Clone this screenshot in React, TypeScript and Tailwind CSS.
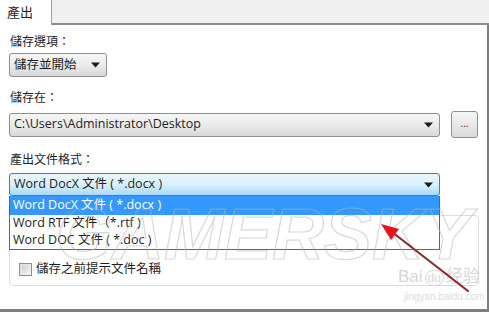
import React from 'react';

const font = { fontFamily: '"Open Sans", "Noto Sans CJK TC", sans-serif' };

const Arrow = () => (
  <svg width="9" height="6" viewBox="0 0 9 6" className="shrink-0">
    <path d="M0 0.5 H9 L4.5 5.5 Z" fill="#1a1a1a" />
  </svg>
);

const Combo = ({ label, className, blue }: { label: string; className: string; blue?: boolean }) => (
  <div
    className={`flex items-center justify-between pl-[4px] pr-[6px] rounded-[3px] border text-[12.5px] text-[#1e1e1e] ${
      blue
        ? 'border-[#3c7fb1] bg-gradient-to-b from-[#eaf6fd] via-[#d9f0fc] to-[#a7d9f5]'
        : 'border-[#8e8f8f] bg-gradient-to-b from-[#f6f6f6] via-[#ebebeb] to-[#d8d8d8]'
    } ${className}`}
  >
    <span className="leading-none whitespace-nowrap">{label}</span>
    <Arrow />
  </div>
);

export default function App() {
  return (
    <div className="relative w-[489px] h-[312px] bg-white overflow-hidden flex flex-col text-[#1e1e1e]" style={font}>
      <div className="flex h-[25px] shrink-0">
        <div className="w-[52px] border-r border-[#a0a0a0] bg-white flex items-center pl-[7px] text-[13px] leading-none">產出</div>
        <div className="flex-1 bg-[#f0f0f0] border-b-2 border-[#8c8c8c]" />
      </div>

      <div className="flex-1 border-r-2 border-b-[3px] border-[#7e7e7e] pl-[9px] flex flex-col">
        <div className="mt-[9px] h-[16px] text-[12px] leading-[16px] pl-[1px]">儲存選項：</div>
        <Combo label="儲存並開始" className="mt-[3px] w-[98px] h-[24px]" />

        <div className="mt-[13px] h-[16px] text-[12px] leading-[16px] pl-[1px]">儲存在：</div>
        <div className="mt-[5px] flex items-center h-[27px]">
          <Combo label="C:\Users\Administrator\Desktop" className="w-[431px] h-[24px]" />
          <div className="ml-[11px] w-[27px] h-[27px] rounded-[3px] border border-[#8e8f8f] bg-gradient-to-b from-[#f6f6f6] to-[#dadada] flex items-center justify-center text-[10px] leading-none text-[#333] pb-[3px]">
            ...
          </div>
        </div>

        <div className="mt-[14px] h-[16px] text-[12px] leading-[16px] pl-[1px]">產出文件格式：</div>
        <div className="relative mt-[5px]">
          <Combo label="Word DocX 文件 ( *.docx )" className="w-[431px] h-[23px]" blue />
          <div className="mt-[19px] w-[470px] h-[71px] rounded-[4px] border border-[#d5dfe5] flex items-end pb-[9px] pl-[9px]">
            <div className="flex items-center gap-[4px]">
              <div className="w-[13px] h-[13px] border border-[#8e8f8f] bg-gradient-to-br from-[#dcdcdc] to-[#f4f4f4] p-[2px]">
                <div className="w-full h-full bg-gradient-to-br from-[#cbcfd5] to-[#f0f2f4]" />
              </div>
              <span className="text-[12.5px] leading-none">儲存之前提示文件名稱</span>
            </div>
          </div>

          <div className="absolute left-0 top-[23px] w-[431px] h-[54px] bg-white border border-t-0 border-[#646464] flex flex-col text-[12.5px]">
            <div className="h-[19px] bg-[#3399ff] text-white pl-[3px] flex items-center leading-none">Word DocX 文件 ( *.docx )</div>
            <div className="h-[17px] pl-[3px] flex items-center leading-none">Word RTF 文件（*.rtf )</div>
            <div className="h-[17px] pl-[3px] flex items-center leading-none">Word DOC 文件 ( *.doc )</div>
          </div>
        </div>
      </div>

      <div
        className="absolute left-[56px] top-[198px] text-[72px] italic font-bold leading-none pointer-events-none text-transparent opacity-50"
        style={{ fontFamily: '"Liberation Sans", sans-serif', WebkitTextStroke: '1.2px #b4b4b4' }}
      >
        GAMERSKY
      </div>
      <div className="absolute left-[398px] top-[268px] text-[17px] leading-none text-[#d6d6d6] pointer-events-none" style={{ fontFamily: '"Liberation Sans", "Noto Sans CJK SC", sans-serif' }}>
        Bai<span className="mx-[2px] border border-[#d6d6d6] rounded-full px-[2px] text-[12px]">du</span>经验
      </div>
      <div className="absolute left-[404px] top-[292px] text-[10px] leading-none text-[#dcdcdc] pointer-events-none" style={{ fontFamily: '"Liberation Sans", sans-serif' }}>
        jingyan.baidu.com
      </div>

      <svg className="absolute left-0 top-0 pointer-events-none" width="489" height="312">
        <line x1="468" y1="291" x2="392" y2="232" stroke="#8a2b2f" strokeWidth="2.2" strokeLinecap="round" />
        <path d="M381 224 L399 229 L391 240 Z" fill="#e4141c" />
      </svg>
    </div>
  );
}
